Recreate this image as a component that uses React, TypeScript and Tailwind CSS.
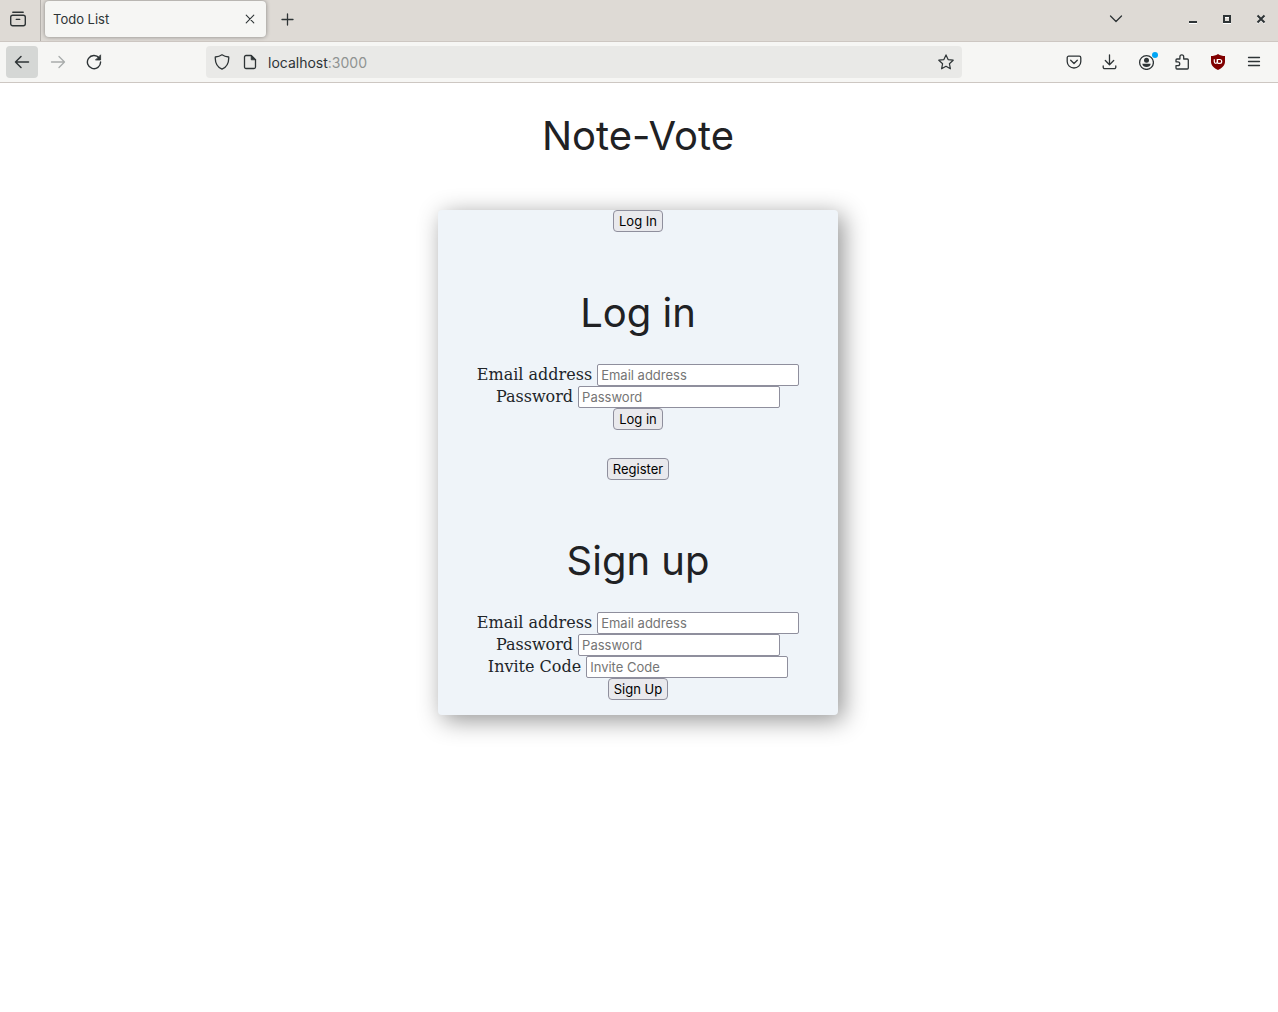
import type { ReactNode } from "react";

function Icon({ children, className = "" }: { children: ReactNode; className?: string }) {
  return (
    <svg
      viewBox="0 0 16 16"
      fill="none"
      stroke="currentColor"
      strokeWidth="1.3"
      strokeLinecap="round"
      strokeLinejoin="round"
      aria-hidden="true"
      className={"size-4 shrink-0 " + className}
    >
      {children}
    </svg>
  );
}

function TabBar() {
  return (
    <div className="flex h-[42px] border-b border-[#cdc7c2] bg-[#dedad5]">
      <div className="flex w-[41px] shrink-0 border-r border-[#b5b1ad]">
        <button aria-label="Recent browsing" className="flex w-9 items-center justify-center pb-1">
          <Icon>
            <rect x="0.7" y="4.2" width="14.6" height="10.6" rx="2" strokeWidth="1.4" />
            <path d="M2.8 1.2h10.4M6.3 8.4h3.4" strokeWidth="1.4" />
          </Icon>
        </button>
      </div>
      <div className="ml-1 mt-px flex h-9 w-[221px] items-center justify-between rounded bg-[#f6f6f4] px-2 shadow-[0_0_4px_rgba(0,0,0,0.4)]">
        <span className="pt-0.5">Todo List</span>
        <button aria-label="Close tab" className="flex size-4 items-center justify-center">
          <Icon>
            <path d="M4.2 4.2l7.6 7.6M11.8 4.2l-7.6 7.6" strokeWidth="1.1" />
          </Icon>
        </button>
      </div>
      <button aria-label="New tab" className="ml-3 flex h-[38px] w-5 items-center justify-center">
        <Icon>
          <path d="M7.5 3v11M2 8.5h11" />
        </Icon>
      </button>
      <div className="ml-auto flex h-[38px] items-center">
        <button aria-label="List all tabs" className="mr-[60px]">
          <Icon>
            <path d="M1.5 5L7 10.5 12.5 5" />
          </Icon>
        </button>
        <div className="flex items-center gap-[18px] pr-[9px]">
          <button aria-label="Minimize">
            <svg viewBox="0 0 16 16" className="size-4" aria-hidden="true">
              <path d="M4 12h8v1H4z" fill="#fff" />
              <path d="M4 10h8v2H4z" fill="currentColor" />
            </svg>
          </button>
          <button aria-label="Maximize">
            <svg viewBox="0 0 16 16" className="size-4" aria-hidden="true">
              <path d="M4 12h8v1H4zM6 6h4v1H6z" fill="#fff" />
              <path d="M5 5h6v6H5z" fill="none" stroke="currentColor" strokeWidth="2" />
            </svg>
          </button>
          <button aria-label="Close window">
            <svg viewBox="0 0 16 16" className="size-4" aria-hidden="true">
              <path d="M4.5 5.5l7 7M11.5 5.5l-7 7" stroke="#fff" strokeWidth="1.5" />
              <path d="M4.5 4.5l7 7M11.5 4.5l-7 7" stroke="currentColor" strokeWidth="2" />
            </svg>
          </button>
        </div>
      </div>
    </div>
  );
}

function NavBar() {
  return (
    <div className="flex h-[41px] items-center border-b border-[#cdc7c2] bg-[#f6f6f4] px-1.5">
      <div className="flex w-[200px] shrink-0 items-center gap-1">
        <button aria-label="Back" className="flex size-8 items-center justify-center rounded bg-[#d5d7d5]">
          <Icon>
            <path d="M14.5 8H1.5M7 2.5L1.5 8 7 13.5" strokeWidth="1.5" />
          </Icon>
        </button>
        <button aria-label="Forward" disabled className="flex size-8 items-center justify-center text-[#a9acab]">
          <Icon>
            <path d="M1.5 8h13M9 2.5L14.5 8 9 13.5" />
          </Icon>
        </button>
        <button aria-label="Reload" className="flex size-8 items-center justify-center">
          <Icon>
            <path d="M13.2 4A6.6 6.6 0 1 0 14.6 8" strokeWidth="1.4" />
            <path d="M14.6 1.2v4.8H9.8z" fill="currentColor" strokeWidth="0.8" />
          </Icon>
        </button>
      </div>
      <div className="flex h-8 min-w-0 max-w-[756px] flex-1 items-center rounded bg-[#e9e9e7] px-2">
        <Icon>
          <path d="M8 .8c1.8 1.3 4 2 6.7 2.2.3 5-1.7 9.8-6.7 12.200C3 12.800 1 8 1.300 3 4 2.800 6.200 2.100 8 .8z" />
        </Icon>
        <Icon className="ml-3">
          <path d="M4 1.500h5.200l4.300 4.300v7.200a1.500 1.500 0 0 1-1.500 1.500H4A1.500 1.500 0 0 1 2.500 13V3A1.500 1.500 0 0 1 4 1.500z" />
          <path d="M9.200 1.500v4.300h4.300z" fill="currentColor" strokeWidth="0.8" />
        </Icon>
        <div className="ml-2.5 flex-1 pt-0.5 text-[14px] leading-5">
          localhost<span className="text-[#8f9392]">:3000</span>
        </div>
        <button aria-label="Bookmark this page">
          <Icon>
            <path d="M8 .9l2.100 4.700 5.100.6-3.800 3.500 1 5.100L8 12.300l-4.400 2.500 1-5.100L.8 6.200l5.100-.6z" strokeWidth="1.2" />
          </Icon>
        </button>
      </div>
      <div className="ml-auto flex items-center gap-5 pl-4 pr-2.5">
        <button aria-label="Save to Pocket">
          <Icon>
            <path d="M2.700 2.200h10.600a1.500 1.500 0 0 1 1.500 1.500v3.800a6.800 6.500 0 0 1-13.600 0V3.700a1.500 1.500 0 0 1 1.500-1.500zM4.700 6.300L8 9.500l3.300-3.200" />
          </Icon>
        </button>
        <button aria-label="Downloads">
          <Icon>
            <path d="M7.500 .8v9.700M3.300 6.500l4.200 4.200 4.200-4.200M1.200 12v1.200a1.500 1.500 0 0 0 1.500 1.500h9.600a1.500 1.500 0 0 0 1.500-1.500V12" />
          </Icon>
        </button>
        <button aria-label="Account" className="relative">
          <Icon>
            <circle cx="8.5" cy="8.5" r="6.9" />
            <circle cx="8.5" cy="6.3" r="2.5" fill="currentColor" stroke="none" />
            <path d="M4.300 9.700h8.400c-.2 2.100-2 3.300-4.200 3.300s-4-1.200-4.200-3.300z" fill="currentColor" stroke="none" />
          </Icon>
          <span className="absolute -right-1 -top-0.5 size-1.5 rounded-full bg-[#00a5f5]" />
        </button>
        <button aria-label="Extensions">
          <Icon>
            <path d="M2 7.800V6a1 1 0 0 1 1-1h2.900V2.700a1.900 1.900 0 0 1 3.800 0V5h3.600a1 1 0 0 1 1 1v8a1 1 0 0 1-1 1H3a1 1 0 0 1-1-1v-2.300h1.800a1.900 1.900 0 0 0 0-3.900z" />
          </Icon>
        </button>
        <button aria-label="uBlock Origin">
          <svg viewBox="0 0 16 16" className="size-4" aria-hidden="true">
            <path d="M8 0c2.200 1.500 4.500 2 7 2v5.500c0 4-3 6.500-7 8.500-4-2-7-4.500-7-8.500V2c2.500 0 4.800-.5 7-2z" fill="#800000" />
            <path d="M4.300 5.200v2.600a1.500 1.500 0 0 0 3 0V5.200" fill="none" stroke="#fff" strokeWidth="1.2" />
            <path d="M7.500 9.300V5.500h2.300a1.900 1.900 0 0 1 0 3.800H7.500" fill="none" stroke="#fff" strokeWidth="1.2" />
          </svg>
        </button>
        <button aria-label="Open application menu">
          <Icon>
            <path d="M2.500 3.500h11M2.500 7.500h11M2.500 11.500h11" />
          </Icon>
        </button>
      </div>
    </div>
  );
}

function Field({ id, label, type }: { id: string; label: string; type: string }) {
  return (
    <div className="flex items-center justify-center gap-[5px]">
      <label htmlFor={id} className="leading-[22px]">
        {label}
      </label>
      <input
        id={id}
        type={type}
        placeholder={label}
        className="h-[22px] w-[202px] rounded-xs border border-[#8f8f9d] bg-white px-[3px] font-[Inter,sans-serif] text-[13px] text-black placeholder:text-[#757575]"
      />
    </div>
  );
}

function PushButton({ children, type = "button" }: { children: ReactNode; type?: "button" | "submit" }) {
  return (
    <button
      type={type}
      className="block h-[22px] rounded-[4px] border border-[#8f8f9d] bg-[#e9e9ed] px-[5px] font-[Inter,sans-serif] text-[13px] leading-5 text-black"
    >
      {children}
    </button>
  );
}

const headingClass = "font-[Inter,sans-serif] text-[40px] leading-[52px] text-[#202124]";

export default function App() {
  return (
    <div className="min-h-screen bg-white font-[Inter,sans-serif] text-[13px] text-[#2e3436]">
      <header>
        <TabBar />
        <NavBar />
      </header>
      <main className="flex flex-col items-center pr-0.5 pt-[27px] font-['DejaVu_Serif',serif] text-[16px] text-[#212529]">
        <h1 className={headingClass}>Note-Vote</h1>
        <section className="mt-12 flex w-full max-w-[400px] flex-col items-center rounded bg-[#eff4f9] pb-[15px] shadow-[5px_5px_25px_rgba(0,0,0,0.43)]">
          <PushButton>Log In</PushButton>
          <form className="mt-[55px] flex flex-col items-center">
            <h2 className={headingClass}>Log in</h2>
            <div className="mt-[25px]">
              <Field id="login-email" label="Email address" type="email" />
              <Field id="login-password" label="Password" type="password" />
            </div>
            <PushButton type="submit">Log in</PushButton>
          </form>
          <div className="mt-7">
            <PushButton>Register</PushButton>
          </div>
          <form className="mt-[55px] flex flex-col items-center">
            <h2 className={headingClass}>Sign up</h2>
            <div className="mt-[25px]">
              <Field id="signup-email" label="Email address" type="email" />
              <Field id="signup-password" label="Password" type="password" />
              <Field id="signup-code" label="Invite Code" type="text" />
            </div>
            <PushButton type="submit">Sign Up</PushButton>
          </form>
        </section>
      </main>
    </div>
  );
}
